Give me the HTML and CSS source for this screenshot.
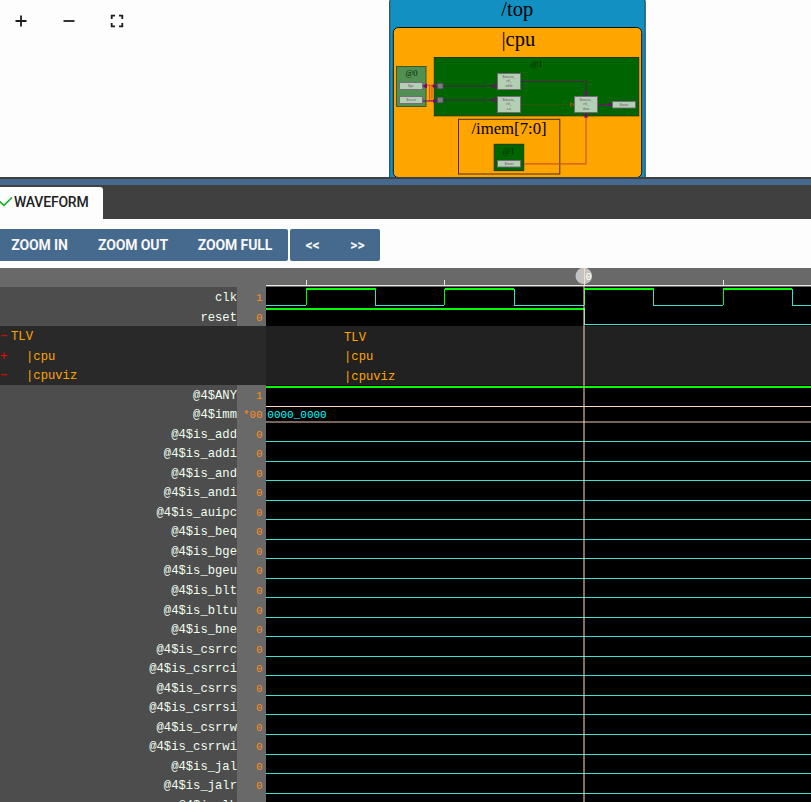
FILE: index.html
```html
<!DOCTYPE html>
<html lang="en">
<head>
<meta charset="utf-8">
<title>Waveform viewer</title>
<link rel="stylesheet" href="styles.css">
</head>
<body>
<section class="diagram-pane">
  <nav class="zoom-tools">
    <svg class="tool" viewBox="0 0 16 16"><path d="M8 2.5v11M2.5 8h11"/></svg>
    <svg class="tool" viewBox="0 0 16 16"><path d="M2.5 8h11"/></svg>
    <svg class="tool full" viewBox="0 0 16 16"><path d="M2.7 6V2.7h3.3M10 2.7h3.3v3.3M13.3 10v3.3h-3.3M6 13.3H2.7v-3.3"/></svg>
  </nav>
  <svg class="diagram" viewBox="389 0 257 177">
    <defs>
      <marker id="arrow" viewBox="0 0 5 4" refX="4.5" refY="2" markerWidth="5" markerHeight="4" markerUnits="userSpaceOnUse" orient="auto"><path d="M0 0L5 2L0 4z" fill="#800080"/></marker>
    </defs>
    <rect class="top-scope" x="389.7" y="-3" width="255.5" height="190" rx="5"/>
    <rect class="cpu-scope" x="393.3" y="27.5" width="248.4" height="150" rx="5"/>
    <text class="t20" x="517.3" y="16.4">/top</text>
    <text class="t20" x="518.3" y="46.4">|cpu</text>
    <rect class="stage pale" x="396.5" y="66.5" width="29.5" height="40"/>
    <rect class="stage" x="434.3" y="57.5" width="204.4" height="58.3"/>
    <rect class="box" x="458.5" y="119.3" width="101.3" height="54.7"/>
    <rect class="stage" x="494.2" y="144.3" width="29.5" height="26.3"/>
    <text class="t9" x="411.5" y="75.5">@0</text>
    <text class="t9" x="536.5" y="66.5">@1</text>
    <text class="t9" x="508.8" y="153.7">@1</text>
    <text class="t16" x="509" y="134.4">/imem[7:0]</text>
    <path class="red" d="M424 85.3h13M429.7 86v14.5h5M432 86v13M524 163.8h62V118"/>
    <path class="purple" d="M443 86h53M443 100h53M521 81.5h65v13"/>
    <path class="dots" d="M521 104.5h50"/>
    <path class="hollow" d="M570.5 102.8l3.5 1.7-3.5 1.7z"/>
    <path class="link" d="M432 86h5"/><path class="link" d="M423 101h14"/>
    <path class="link" d="M492 86h5"/><path class="link" d="M492 100h5"/>
    <path class="link" d="M586 92v4"/><path class="link" d="M598 104.5h14"/><path class="link" d="M586 118v-5"/>
    <path class="plug" d="M422 86l5-2.5v5z"/>
    <g class="port"><rect x="437.5" y="83.3" width="5.5" height="5.5"/><rect x="437.5" y="97.3" width="5.5" height="5.5"/></g>
    <g class="node">
      <rect x="399.5" y="82.5" width="23" height="7"/><rect x="399.5" y="96.5" width="23" height="7"/>
      <rect x="497.5" y="73.5" width="23" height="16"/><rect x="497.5" y="96.5" width="23" height="16"/>
      <rect x="574.5" y="96.5" width="23" height="16"/><rect x="612.5" y="101.5" width="23" height="6.5"/>
      <rect x="497.5" y="160.5" width="23" height="6.5"/>
    </g>
    <g class="tiny">
      <text x="411" y="87.3">$pc</text><text x="411" y="101.3">$reset</text>
      <text x="509" y="78">$imem_</text><text x="509" y="82.3">rd_</text><text x="509" y="87">addr</text>
      <text x="509" y="101">$imem_</text><text x="509" y="105.3">rd_</text><text x="509" y="110">en</text>
      <text x="586" y="101">$imem_</text><text x="586" y="105.3">rd_</text><text x="586" y="110">data</text>
      <text x="624" y="106">$instr</text><text x="509" y="165">$instr</text>
    </g>
  </svg>
</section>
<div class="splitter"></div>
<header class="tabs">
  <div class="tab"><svg class="check" viewBox="0 0 13 12"><path d="M-1 5L4 9.3L12 1.5"/></svg>WAVEFORM</div>
</header>
<div class="toolbar">
  <div class="group"><button class="zin">ZOOM IN</button><button class="zout">ZOOM OUT</button><button class="zfull">ZOOM FULL</button></div>
  <div class="group"><button class="prev">&lt;&lt;</button><button class="next">&gt;&gt;</button></div>
</div>
<main class="viewer">
  <div class="signals">
    <div class="row"><span>clk</span><b>1</b></div>
    <div class="row"><span>reset</span><b>0</b></div>
    <div class="row scope"><i>−</i><span>TLV</span></div>
    <div class="row scope child"><i>+</i><span>|cpu</span></div>
    <div class="row scope child"><i>−</i><span>|cpuviz</span></div>
    <div class="row"><span>@4$ANY</span><b>1</b></div>
    <div class="row"><span>@4$imm</span><b>*00</b></div>
    <div class="row"><span>@4$is_add</span><b>0</b></div>
    <div class="row"><span>@4$is_addi</span><b>0</b></div>
    <div class="row"><span>@4$is_and</span><b>0</b></div>
    <div class="row"><span>@4$is_andi</span><b>0</b></div>
    <div class="row"><span>@4$is_auipc</span><b>0</b></div>
    <div class="row"><span>@4$is_beq</span><b>0</b></div>
    <div class="row"><span>@4$is_bge</span><b>0</b></div>
    <div class="row"><span>@4$is_bgeu</span><b>0</b></div>
    <div class="row"><span>@4$is_blt</span><b>0</b></div>
    <div class="row"><span>@4$is_bltu</span><b>0</b></div>
    <div class="row"><span>@4$is_bne</span><b>0</b></div>
    <div class="row"><span>@4$is_csrrc</span><b>0</b></div>
    <div class="row"><span>@4$is_csrrci</span><b>0</b></div>
    <div class="row"><span>@4$is_csrrs</span><b>0</b></div>
    <div class="row"><span>@4$is_csrrsi</span><b>0</b></div>
    <div class="row"><span>@4$is_csrrw</span><b>0</b></div>
    <div class="row"><span>@4$is_csrrwi</span><b>0</b></div>
    <div class="row"><span>@4$is_jal</span><b>0</b></div>
    <div class="row"><span>@4$is_jalr</span><b>0</b></div>
    <div class="row"><span>@4$is_lb</span><b>0</b></div>
  </div>
  <svg class="waves" viewBox="266 268 545 534">
    <rect x="266" y="268" width="545" height="19" fill="#696969"/>
    <rect x="266" y="326" width="545" height="59" fill="#212121"/>
    <g class="crisp">
      <path class="axis" d="M266 285.5H811M306.5 280v5M444.5 280v5M723.5 280v5"/>
      <path class="low" d="M266 305.5H306M375.5 289V305.5H444M514.5 289V305.5H584M653.5 289V305.5H723M792.5 289V305.5H811M584.5 308V324.5H811"/>
      <path class="rise" d="M306.5 289v16M444.5 289v16M584.5 289v16M723.5 289v16"/>
      <path class="high" d="M306 289H376M445 289H514M584 289H654M723 289H792M266 309H584M266 387H811"/>
      <path class="bus" d="M266 406.5H811"/><path class="bus dim" d="M266 422H811"/>
      <path class="low" d="M266 441.5h545M266 461.5h545M266 480.5h545M266 500.5h545M266 519.5h545M266 539.5h545M266 558.5h545M266 578.5h545M266 597.5h545M266 617.5h545M266 636.5h545M266 656.5h545M266 675.5h545M266 695.5h545M266 714.5h545M266 734.5h545M266 754.5h545M266 773.5h545M266 793.5h545"/>
    </g>
    <g class="scope-text"><text x="344" y="341">TLV</text><text x="344" y="360">|cpu</text><text x="344" y="380">|cpuviz</text></g>
    <text class="bus-text" x="267.3" y="418">0000_0000</text>
    <circle cx="583.8" cy="276" r="8.3" fill="#c3c3c3"/>
    <path class="cursor" d="M584 285V802"/>
    <path class="cursor-head" d="M584.5 268V285"/>
    <text class="time" x="585.5" y="280">0</text>
  </svg>
</main>
</body>
</html>
```
FILE: styles.css
```css
* { box-sizing: border-box; }
body { margin: 0; width: 811px; height: 802px; overflow: hidden; background: #fdfdfd; font-family: Roboto, sans-serif; }
.diagram-pane { height: 177px; display: flex; justify-content: space-between; }
.zoom-tools { display: flex; gap: 32px; padding: 12.5px 0 0 12.5px; }
.tool { width: 16px; height: 16px; fill: none; stroke: #1c1c1c; stroke-width: 1.8; }
.diagram { width: 257px; height: 177px; margin-right: 165px; font-family: "Liberation Serif", serif; text-anchor: middle; }
.top-scope { fill: #1190c1; stroke: #12384a; }
.cpu-scope { fill: #ffa500; stroke: #111; }
.stage { fill: #006400; stroke: #173b00; }
.pale { fill: #528f52; stroke: #3f5a20; }
.box { fill: none; stroke: #4a3000; }
.t20 { font-size: 20.5px; }
.t16 { font-size: 16.7px; }
.t9 { font-size: 8.5px; fill: #052605; }
.tiny { font-size: 4px; fill: #705070; }
.node rect { fill: #b4d0b4; stroke: #7b637d; stroke-width: .9; }
.port rect { fill: #7b7b80; stroke: #67406c; stroke-width: .6; }
.red { fill: none; stroke: #cf5728; stroke-width: 1.2; }
.purple { fill: none; stroke: #4c214c; stroke-width: 1.1; }
.dots { stroke: #704414; stroke-width: .8; stroke-dasharray: 1 1; }
.hollow { fill: none; stroke: #c35314; stroke-width: .7; }
.link { fill: none; stroke: #800080; stroke-width: 1; marker-end: url(#arrow); }
.plug { fill: #800080; }
.splitter { height: 8px; background: #466a8e; border-top: 2px solid #404040; }
.tabs { height: 34px; background: #404040; padding-top: 2px; display: flex; }
.tab { width: 103px; height: 32px; background: #fdfdfd; border-top-right-radius: 3px; display: flex; align-items: center; font-size: 14px; font-weight: 500; color: #222; letter-spacing: -.2px; padding-bottom: 2px; }
.check { width: 13px; height: 12px; margin-right: 1px; fill: none; stroke: #1cae2b; stroke-width: 1.7; }
.toolbar { height: 49px; padding-top: 10px; display: flex; gap: 2px; align-items: flex-start; }
.group { display: flex; height: 32px; background: #466a8e; border-radius: 0 2px 2px 0; }
.group + .group { border-radius: 2px; }
button { border: 0; background: none; color: #f7f7f7; font: 700 14px Roboto, sans-serif; padding: 0 0 1px; white-space: nowrap; letter-spacing: -.1px; }
.zin { width: 79px; }
.zout { width: 108px; }
.zfull { width: 101px; padding-right: 5px; }
.prev { width: 45px; }
.next { width: 45px; }
.viewer { display: flex; height: 534px; background: #000; font-family: "Liberation Mono", monospace; }
.signals { width: 266px; padding-top: 19px; background: #696969; overflow: hidden; }
.row { height: 19.54px; display: flex; line-height: 23.4px; font-size: 12.2px; color: #f0fff0; }
.row span { width: 237px; background: #4d4d4d; text-align: right; white-space: pre; }
.row b { width: 25.5px; font-size: 10.8px; font-weight: 400; color: #ff8c1a; text-align: right; }
.scope { background: #292929; color: #ffa500; }
.scope span { background: none; text-align: left; padding-left: 3px; }
.scope i { width: 8px; font-style: normal; color: #f00; }
.child span { padding-left: 18px; }
.waves { width: 545px; height: 534px; }
.crisp { shape-rendering: crispEdges; fill: none; }
.axis { stroke: #e8e8e0; }
.low { stroke: #40e0d0; }
.rise { stroke: #0f0; }
.high { stroke: #0f0; stroke-width: 2; }
.bus { stroke: #ffdab9; }
.dim { stroke: #776657; stroke-width: 2; }
.scope-text { fill: #ffa500; font-size: 12.2px; }
.bus-text { fill: #0ff; font-size: 11px; }
.cursor { stroke: #ffdeb5; stroke-width: 2; opacity: .5; }
.cursor-head { stroke: #ffdeb5; }
.time { fill: #fff; font-size: 10.5px; }
```
